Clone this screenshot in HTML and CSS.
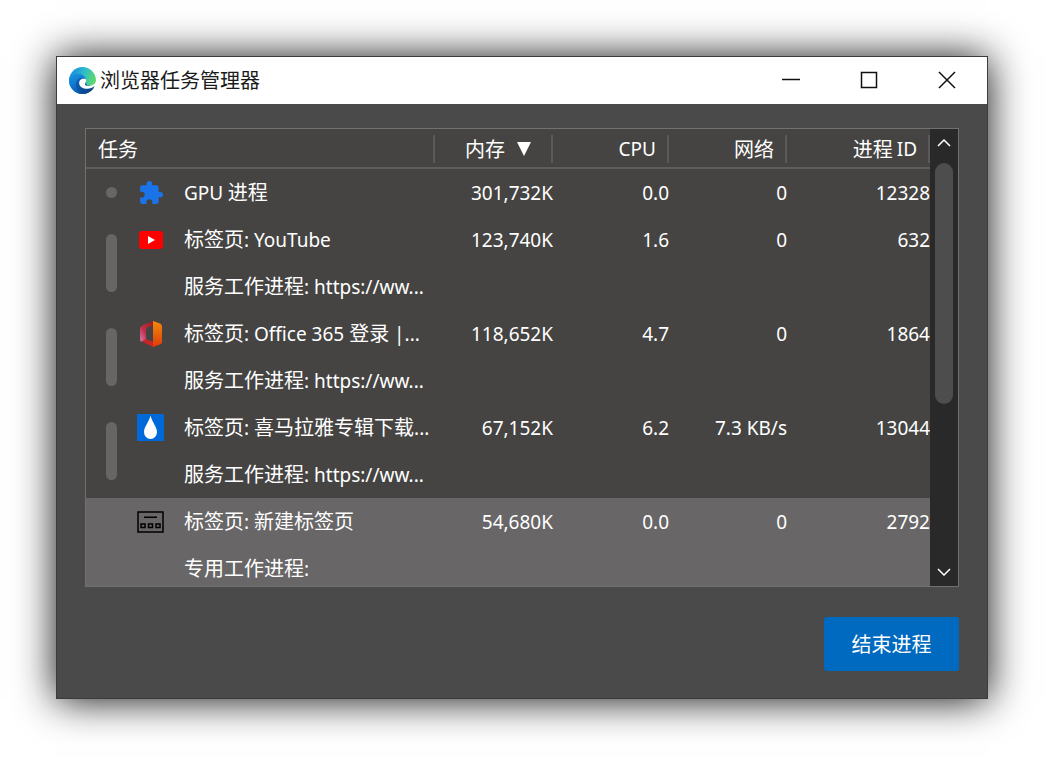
FILE: index.html
```html
<!DOCTYPE html>
<html lang="zh-CN">
<head>
<meta charset="utf-8">
<meta name="viewport" content="width=device-width, initial-scale=1">
<title>浏览器任务管理器</title>
<link rel="stylesheet" href="styles.css">
</head>
<body>
<main class="window">
  <header class="titlebar">
    <svg class="logo" viewBox="0 0 28 28" aria-hidden="true">
      <defs>
        <linearGradient id="e1" x1="4" y1="5" x2="28" y2="14" gradientUnits="userSpaceOnUse"><stop offset="0" stop-color="#1c94dc"/><stop offset=".45" stop-color="#2fbccb"/><stop offset=".75" stop-color="#4fd08e"/><stop offset="1" stop-color="#5fdc62"/></linearGradient>
        <linearGradient id="e2" x1="4" y1="8" x2="14" y2="27" gradientUnits="userSpaceOnUse"><stop offset="0" stop-color="#1a92dc"/><stop offset=".5" stop-color="#0d74ce"/><stop offset="1" stop-color="#0c55a8"/></linearGradient>
        <linearGradient id="e3" x1="10" y1="14" x2="24" y2="26" gradientUnits="userSpaceOnUse"><stop offset="0" stop-color="#0c5cae"/><stop offset="1" stop-color="#113f85"/></linearGradient>
      </defs>
      <circle cx="14" cy="14" r="14" fill="url(#e1)"/>
      <path fill="url(#e2)" d="M0 14C0 9.500 4 7 8.500 7c5 0 9 2.500 9 7.500L19 22l6.500 0A14 14 0 0 1 0 14z"/>
      <path fill="url(#e3)" d="M12.500 11C8 13 6.500 17 7.500 20.500c1 4 4 6.500 8.500 7.300A14 14 0 0 0 26.500 20L18 19z"/>
      <path fill="#fff" d="M17 12.500c-3-1-6.500.5-6.500 4 0 4 4 6 8.500 6 3 0 5.500-1 7.300-2.500L29 21V14.500h-1C27 18.500 22.500 20 19 19.500c-2.500-.5-3-1.500-2-3 1-1.500 1-3.500 0-4z"/>
    </svg>
    <h1 class="title">浏览器任务管理器</h1>
    <div class="controls">
      <button class="control" type="button" aria-label="最小化"><svg viewBox="0 0 18 18"><path d="M0 8.500h18"/></svg></button>
      <button class="control" type="button" aria-label="最大化"><svg viewBox="0 0 18 18"><path d="M1.500 1.500h15v15h-15z"/></svg></button>
      <button class="control" type="button" aria-label="关闭"><svg viewBox="0 0 18 18"><path d="M1 1l16 16M17 1L1 17"/></svg></button>
    </div>
  </header>
  <div class="content">
    <section class="panel">
      <div class="list">
        <table class="tasks">
          <colgroup><col class="c-group"><col class="c-icon"><col><col class="c-memory"><col class="c-cpu"><col class="c-network"><col class="c-pid"></colgroup>
          <thead>
            <tr>
              <th class="head-task" colspan="3" scope="col"><div class="head">任务</div></th>
              <th scope="col" aria-sort="descending"><div class="head head-sorted">内存<svg class="sort" viewBox="0 0 14 14" aria-hidden="true"><path d="M0 0h14L7 14z"/></svg></div></th>
              <th scope="col"><div class="head latin">CPU</div></th>
              <th scope="col"><div class="head">网络</div></th>
              <th scope="col"><div class="head">进程 <span class="latin">ID</span></div></th>
            </tr>
          </thead>
          <tbody>
            <tr>
              <td class="group"><span class="mark dot"></span></td>
              <td class="icon"><svg width="24" height="24" viewBox="1 1 22 22" aria-hidden="true"><path fill="#1a73e8" d="M20.500 11H19V7c0-1.100-.9-2-2-2h-4V3.500a2.500 2.500 0 0 0-5 0V5H4c-1.100 0-2 .9-2 2v3.800h1.500a2.700 2.700 0 0 1 0 5.400H2V20c0 1.100.9 2 2 2h3.800v-1.500a2.700 2.700 0 0 1 5.400 0V22H17c1.100 0 2-.9 2-2v-4h1.500a2.500 2.500 0 0 0 0-5z"/></svg></td>
              <td class="name"><span class="latin">GPU</span> 进程</td>
              <td class="num">301,732K</td><td class="num">0.0</td><td class="num">0</td><td class="num">12328</td>
            </tr>
          </tbody>
          <tbody>
            <tr>
              <td class="group" rowspan="2"><span class="mark"></span></td>
              <td class="icon"><svg width="24" height="18" viewBox="0 0 24 18" aria-hidden="true"><rect width="24" height="18" rx="3" fill="#f00"/><path fill="#fff" d="M9 5l7 4-7 4z"/></svg></td>
              <td class="name">标签页<span class="latin">: YouTube</span></td>
              <td class="num">123,740K</td><td class="num">1.6</td><td class="num">0</td><td class="num">632</td>
            </tr>
            <tr><td></td><td class="name">服务工作进程<span class="latin">: https://ww...</span></td><td></td><td></td><td></td><td></td></tr>
          </tbody>
          <tbody>
            <tr>
              <td class="group" rowspan="2"><span class="mark"></span></td>
              <td class="icon"><svg width="22" height="26" viewBox="0 0 22 26" aria-hidden="true">
                <defs>
                  <linearGradient id="o1" x1="0" y1="0" x2="0" y2="1"><stop offset="0" stop-color="#f58a08"/><stop offset="1" stop-color="#dd3a0c"/></linearGradient>
                  <linearGradient id="o2" x1="0" y1="1" x2="1" y2="0"><stop offset="0" stop-color="#d37bb0"/><stop offset=".4" stop-color="#c2304a"/><stop offset="1" stop-color="#a01a12"/></linearGradient>
                </defs>
                <path fill="url(#o2)" d="M14 0L3 4Q0 5.500 0 8v10q0 3 2 2.500L6 18V9q0-2 2-3l6-2z"/>
                <path fill="#cc2427" d="M2 20.500L6 18l8 3.500V26l-3-1z"/>
                <path fill="url(#o1)" d="M13 0l7 2.500q2 1 2 3V21q0 2-2 2.500L13 26z"/>
              </svg></td>
              <td class="name">标签页<span class="latin">: Office 365 </span>登录<span class="latin"> |...</span></td>
              <td class="num">118,652K</td><td class="num">4.7</td><td class="num">0</td><td class="num">1864</td>
            </tr>
            <tr><td></td><td class="name">服务工作进程<span class="latin">: https://ww...</span></td><td></td><td></td><td></td><td></td></tr>
          </tbody>
          <tbody>
            <tr>
              <td class="group" rowspan="2"><span class="mark"></span></td>
              <td class="icon"><svg width="27" height="27" viewBox="0 0 27 27" aria-hidden="true"><path fill="#0069d9" d="M0 0h27v27H0z"/><path fill="#fff" d="M13.500 1.500C14.500 7 20 13 20 18a6.500 7 0 0 1-13 0c0-5 5.500-11 6.500-16.500z"/></svg></td>
              <td class="name">标签页<span class="latin">: </span>喜马拉雅专辑下载<span class="latin">...</span></td>
              <td class="num">67,152K</td><td class="num">6.2</td><td class="num">7.3 KB/s</td><td class="num">13044</td>
            </tr>
            <tr><td></td><td class="name">服务工作进程<span class="latin">: https://ww...</span></td><td></td><td></td><td></td><td></td></tr>
          </tbody>
          <tbody class="selected">
            <tr>
              <td rowspan="2"></td>
              <td class="icon"><svg width="27" height="22" viewBox="0 0 27 22" fill="none" stroke="#000" aria-hidden="true"><path stroke-width="1.500" d="M1 1h25v20H1z"/><path stroke-width="1.500" d="M7 6.200h13M4 13h4v3.500H4zM11.500 13h4v3.500h-4zM19 13h4v3.500h-4z"/></svg></td>
              <td class="name">标签页<span class="latin">: </span>新建标签页</td>
              <td class="num">54,680K</td><td class="num">0.0</td><td class="num">0</td><td class="num">2792</td>
            </tr>
            <tr><td></td><td class="name">专用工作进程<span class="latin">:</span></td><td></td><td></td><td></td><td></td></tr>
          </tbody>
        </table>
      </div>
      <div class="scrollbar">
        <button class="arrow" type="button" aria-label="向上滚动"><svg viewBox="0 0 14 8"><path d="M1 7l6-6 6 6"/></svg></button>
        <div class="track"><div class="thumb"></div></div>
        <button class="arrow" type="button" aria-label="向下滚动"><svg viewBox="0 0 14 8"><path d="M1 1l6 6 6-6"/></svg></button>
      </div>
    </section>
    <footer class="actions"><button class="end" type="button">结束进程</button></footer>
  </div>
</main>
</body>
</html>
```
FILE: styles.css
```css
* { box-sizing: border-box; }

body {
  margin: 0;
  height: 100vh;
  padding: 56px 59px 59px 56px;
  display: flex;
  background: #fff;
  color: #fff;
  font: 20px/28px "Noto Sans CJK SC", sans-serif;
}

button {
  border: 0;
  padding: 0;
  background: none;
  color: inherit;
  font: inherit;
}

.latin, .num { font-family: "Noto Sans", sans-serif; font-size: 19px; }

.window {
  flex: 1;
  min-width: 0;
  display: flex;
  flex-direction: column;
  border: 1px solid #3c3c3c;
  background: #4a4a4a;
  box-shadow: 0 1px 38px rgba(0, 0, 0, .95);
}

.titlebar {
  height: 47px;
  flex: none;
  display: flex;
  align-items: center;
  padding: 0 1px 1px 12px;
  background: #fff;
  color: #1b1b1b;
}
.logo { width: 27px; height: 27px; }
.title { margin: 0 0 0 4px; font-size: 20px; font-weight: 400; }
.controls { margin-left: auto; display: flex; height: 100%; }
.control { width: 78px; display: grid; place-items: center; }
.control svg { width: 18px; height: 18px; fill: none; stroke: #111; stroke-width: 1.500; }

.content {
  flex: 1;
  min-height: 0;
  display: flex;
  flex-direction: column;
  gap: 30px;
  padding: 24px 28px 27px;
}

.panel {
  flex: 1;
  min-height: 0;
  display: flex;
  border: 1px solid #717171;
  background: #454442;
}
.list { flex: 1; min-width: 0; overflow: hidden; }

.tasks { width: 100%; table-layout: fixed; border-collapse: separate; border-spacing: 0; }
.c-group { width: 32px; }
.c-icon { width: 65px; }
.c-memory, .c-network { width: 118px; }
.c-cpu { width: 116px; }
.c-pid { width: 143px; }

th { height: 40px; padding: 0; border-bottom: 2px solid #5e5e5d; font-weight: 400; text-align: right; }
.head {
  height: 28px;
  margin: 6px 0 4px;
  padding-right: 11px;
  border-right: 2px solid #5a5a59;
  display: flex;
  align-items: center;
  justify-content: flex-end;
  gap: 4px;
}
.head-task .head { justify-content: flex-start; padding-left: 12px; }
.head-sorted { padding-right: 20px; gap: 12px; }
.sort { width: 14px; height: 14px; fill: #fff; }

td { height: 47px; padding: 0; white-space: nowrap; }
.group { vertical-align: middle; padding-left: 20px; }
.mark { display: block; width: 11px; height: 58px; border-radius: 6px; background: #666; }
.dot { height: 11px; }
.icon { text-align: center; }
.icon svg { display: block; margin: 0 auto; }
.name { padding-left: 1px; }
.num { text-align: right; }
.selected { background: #686667; }

.scrollbar { flex: none; width: 28px; display: flex; flex-direction: column; background: #292929; }
.arrow { height: 28px; flex: none; display: grid; place-items: center; }
.arrow svg { width: 14px; height: 8px; fill: none; stroke: #fff; stroke-width: 1.500; }
.track { flex: 1; padding: 6px 5px 0; }
.thumb { width: 18px; height: 61%; border-radius: 9px; background: #4d4d4d; }

.actions { display: flex; justify-content: flex-end; }
.end { width: 135px; height: 54px; border-radius: 3px; background: #0069c0; }
```
